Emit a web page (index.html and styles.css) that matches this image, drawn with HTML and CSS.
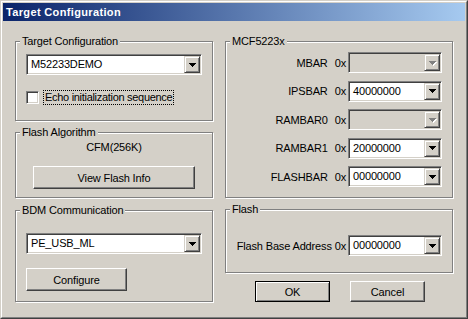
FILE: index.html
```html
<!DOCTYPE html>
<html>
<head>
<meta charset="utf-8">
<link rel="stylesheet" href="styles.css">
</head>
<body>
<div class="window">
  <div class="frame">
    <div class="titlebar"><span class="title">Target Configuration</span></div>
    <div class="client">
      <div class="col col-left">
        <div class="group g-target">
          <span class="legend">Target Configuration</span>
          <div class="combo w-wide">
            <span class="value">M52233DEMO</span>
            <span class="drop"><svg width="7" height="4" viewBox="0 0 7 4"><path d="M0 0h7v1H0zM1 1h5v1H1zM2 2h3v1H2zM3 3h1v1H3z" fill="#000"/></svg></span>
          </div>
          <div class="check">
            <span class="box"></span>
            <span class="focus">Echo initialization sequence</span>
          </div>
        </div>
        <div class="group g-algo">
          <span class="legend">Flash Algorithm</span>
          <div class="algo-name">CFM(256K)</div>
          <div class="btn btn-info">View Flash Info</div>
        </div>
        <div class="group g-bdm">
          <span class="legend">BDM Communication</span>
          <div class="combo w-wide">
            <span class="value">PE_USB_ML</span>
            <span class="drop"><svg width="7" height="4" viewBox="0 0 7 4"><path d="M0 0h7v1H0zM1 1h5v1H1zM2 2h3v1H2zM3 3h1v1H3z" fill="#000"/></svg></span>
          </div>
          <div class="btn btn-config">Configure</div>
        </div>
      </div>
      <div class="col col-right">
        <div class="group g-mcf">
          <span class="legend">MCF5223x</span>
          <div class="row">
            <span class="lbl">MBAR</span><span class="hex">0x</span>
            <div class="combo w-addr disabled">
              <span class="value"></span>
              <span class="drop"><svg width="8" height="5" viewBox="0 0 8 5"><path d="M1 1h7v1H1zM2 2h5v1H2zM3 3h3v1H3zM4 4h1v1H4z" fill="#fff"/><path d="M0 0h7v1H0zM1 1h5v1H1zM2 2h3v1H2zM3 3h1v1H3z" fill="#808080"/></svg></span>
            </div>
          </div>
          <div class="row">
            <span class="lbl">IPSBAR</span><span class="hex">0x</span>
            <div class="combo w-addr">
              <span class="value">40000000</span>
              <span class="drop"><svg width="7" height="4" viewBox="0 0 7 4"><path d="M0 0h7v1H0zM1 1h5v1H1zM2 2h3v1H2zM3 3h1v1H3z" fill="#000"/></svg></span>
            </div>
          </div>
          <div class="row">
            <span class="lbl">RAMBAR0</span><span class="hex">0x</span>
            <div class="combo w-addr disabled">
              <span class="value"></span>
              <span class="drop"><svg width="8" height="5" viewBox="0 0 8 5"><path d="M1 1h7v1H1zM2 2h5v1H2zM3 3h3v1H3zM4 4h1v1H4z" fill="#fff"/><path d="M0 0h7v1H0zM1 1h5v1H1zM2 2h3v1H2zM3 3h1v1H3z" fill="#808080"/></svg></span>
            </div>
          </div>
          <div class="row">
            <span class="lbl">RAMBAR1</span><span class="hex">0x</span>
            <div class="combo w-addr">
              <span class="value">20000000</span>
              <span class="drop"><svg width="7" height="4" viewBox="0 0 7 4"><path d="M0 0h7v1H0zM1 1h5v1H1zM2 2h3v1H2zM3 3h1v1H3z" fill="#000"/></svg></span>
            </div>
          </div>
          <div class="row">
            <span class="lbl">FLASHBAR</span><span class="hex">0x</span>
            <div class="combo w-addr">
              <span class="value">00000000</span>
              <span class="drop"><svg width="7" height="4" viewBox="0 0 7 4"><path d="M0 0h7v1H0zM1 1h5v1H1zM2 2h3v1H2zM3 3h1v1H3z" fill="#000"/></svg></span>
            </div>
          </div>
        </div>
        <div class="group g-flash">
          <span class="legend">Flash</span>
          <div class="row">
            <span class="lbl">Flash Base Address 0x</span>
            <div class="combo w-addr">
              <span class="value">00000000</span>
              <span class="drop"><svg width="7" height="4" viewBox="0 0 7 4"><path d="M0 0h7v1H0zM1 1h5v1H1zM2 2h3v1H2zM3 3h1v1H3z" fill="#000"/></svg></span>
            </div>
          </div>
        </div>
        <div class="actions">
          <div class="btn btn-action btn-default">OK</div>
          <div class="btn btn-action">Cancel</div>
        </div>
      </div>
    </div>
  </div>
</div>
</body>
</html>
```
FILE: styles.css
```css
html, body {
  margin: 0;
  padding: 0;
  background: #d4d0c8;
}

body {
  font-family: "Liberation Sans", Arial, sans-serif;
  font-size: 11px;
  letter-spacing: -0.15px;
  color: #000;
}

.window {
  width: 468px;
  height: 319px;
  box-sizing: border-box;
  border: 1px solid;
  border-color: #d4d0c8 #404040 #404040 #d4d0c8;
  background: #d4d0c8;
}

.frame {
  height: 100%;
  box-sizing: border-box;
  border: 1px solid;
  border-color: #fff #808080 #808080 #fff;
  padding: 1px;
  display: flex;
  flex-direction: column;
}

.titlebar {
  height: 18px;
  flex: none;
  background: linear-gradient(to right, #0a246a, #a6caf0);
  display: flex;
  align-items: center;
  padding-left: 3px;
}

.title {
  color: #fff;
  font-weight: bold;
  font-size: 11px;
  letter-spacing: 0.35px;
}

.client {
  flex: 1;
  display: flex;
  gap: 12px;
  padding: 20px 12px 0 12px;
}

.col {
  display: flex;
  flex-direction: column;
}

.col-left {
  width: 198px;
}

.col-right {
  width: 228px;
}

.group {
  position: relative;
  box-sizing: border-box;
  border: 1px solid #808080;
  box-shadow: inset 1px 1px 0 #fff, 1px 1px 0 #fff;
}

.legend {
  position: absolute;
  top: -7px;
  left: 4px;
  padding: 0 2px;
  line-height: 13px;
  background: #d4d0c8;
  white-space: nowrap;
}

/* left groups */
.g-target {
  height: 80px;
  padding: 12px 0 0 10px;
}

.g-algo {
  height: 66px;
  margin-top: 11px;
  padding-top: 8px;
  display: flex;
  flex-direction: column;
  align-items: center;
}

.g-bdm {
  height: 92px;
  margin-top: 12px;
  padding: 22px 0 0 10px;
}

.algo-name {
  line-height: 13px;
  height: 13px;
}

/* combo box */
.combo {
  display: flex;
  height: 21px;
  box-sizing: border-box;
  border: 1px solid;
  border-color: #808080 #fff #fff #808080;
  box-shadow: inset 1px 1px 0 #404040, inset -1px -1px 0 #d4d0c8;
  padding: 1px;
  background: #fff;
}

.w-wide {
  width: 176px;
}

.w-addr {
  width: 94px;
}

.combo .value {
  flex: 1;
  line-height: 17px;
  padding-left: 3px;
  white-space: nowrap;
  overflow: hidden;
}

.combo.disabled {
  background: #d4d0c8;
}

.drop {
  width: 16px;
  flex: none;
  box-sizing: border-box;
  border: 1px solid;
  border-color: #d4d0c8 #404040 #404040 #d4d0c8;
  box-shadow: inset 1px 1px 0 #fff, inset -1px -1px 0 #808080;
  background: #d4d0c8;
  display: flex;
  align-items: center;
  justify-content: center;
}

.drop svg {
  display: block;
  shape-rendering: crispEdges;
}

.combo.disabled .drop svg {
  margin-left: 1px;
  margin-top: 1px;
}

/* checkbox */
.check {
  display: flex;
  align-items: center;
  margin-top: 15px;
}

.box {
  width: 13px;
  height: 13px;
  box-sizing: border-box;
  border: 1px solid;
  border-color: #808080 #fff #fff #808080;
  box-shadow: inset 1px 1px 0 #404040, inset -1px -1px 0 #d4d0c8;
  background: #fff;
  flex: none;
}

.focus {
  margin-left: 4px;
  border: 1px dotted #000;
  padding: 0 1px;
  line-height: 13px;
  white-space: nowrap;
  letter-spacing: -0.3px;
}

/* buttons */
.btn {
  box-sizing: border-box;
  border: 1px solid;
  border-color: #fff #404040 #404040 #fff;
  box-shadow: inset -1px -1px 0 #808080;
  background: #d4d0c8;
  display: flex;
  align-items: center;
  justify-content: center;
  white-space: nowrap;
}

.btn-info {
  width: 162px;
  height: 23px;
  margin-top: 12px;
}

.btn-config {
  width: 101px;
  height: 23px;
  margin-top: 14px;
}

/* right groups */
.g-mcf {
  height: 157px;
  padding: 10px 10px 0 0;
  display: flex;
  flex-direction: column;
  gap: 7.5px;
}

.row {
  display: flex;
  align-items: center;
  justify-content: flex-end;
}

.lbl {
  white-space: nowrap;
}

.hex {
  margin-left: 7px;
  margin-right: 2px;
}

.g-flash .lbl {
  margin-right: 2px;
}

.g-flash {
  height: 64px;
  margin-top: 11px;
  padding: 25px 10px 0 0;
}

.actions {
  display: flex;
  gap: 20px;
  padding-left: 30px;
  margin-top: 8px;
}

.btn-action {
  width: 75px;
  height: 21px;
}

.btn-default {
  border-color: #000;
  box-shadow: inset 1px 1px 0 #fff, inset -1px -1px 0 #808080;
}
```
